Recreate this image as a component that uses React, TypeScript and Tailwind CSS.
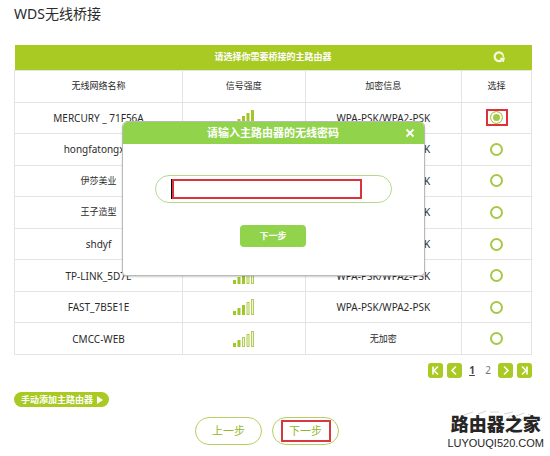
import React, { useState } from 'react';

const networks = [
  { name: 'MERCURY _ 71F56A', signal: 5, security: 'WPA-PSK/WPA2-PSK' },
  { name: 'hongfatongxin', signal: 4, security: 'WPA-PSK/WPA2-PSK' },
  { name: '伊莎美业', signal: 4, security: 'WPA-PSK/WPA2-PSK' },
  { name: '王子造型', signal: 4, security: 'WPA-PSK/WPA2-PSK' },
  { name: 'shdyf', signal: 3, security: 'WPA-PSK/WPA2-PSK' },
  { name: 'TP-LINK_5D7E', signal: 3, security: 'WPA-PSK/WPA2-PSK' },
  { name: 'FAST_7B5E1E', signal: 3, security: 'WPA-PSK/WPA2-PSK' },
  { name: 'CMCC-WEB', signal: 2, security: '无加密' },
];

const bars = [
  { x: 0, h: 4 },
  { x: 4.5, h: 7 },
  { x: 9, h: 10 },
  { x: 13.5, h: 13 },
  { x: 18, h: 16 },
];

function Signal({ level }: { level: number }) {
  return (
    <svg width="22" height="16" viewBox="0 0 22 16" className="mx-auto block" role="img" aria-label={`${level}/5`}>
      {bars.map((bar, i) =>
        i < level ? (
          <rect key={i} x={bar.x} y={16 - bar.h} width="3" height={bar.h} fill="#a2c62a" />
        ) : (
          <rect key={i} x={bar.x + 0.5} y={16.5 - bar.h} width="2" height={bar.h - 1} fill="#f0f6d6" stroke="#b1cd58" />
        )
      )}
    </svg>
  );
}

function PageButton({ label, d }: { label: string; d: string }) {
  return (
    <button type="button" aria-label={label} className="flex size-[15px] items-center justify-center rounded-[3px] bg-[#a9c923]">
      <svg width="15" height="15" viewBox="0 0 15 15" fill="none" stroke="white" strokeWidth="1.6">
        <path d={d} />
      </svg>
    </button>
  );
}

function PasswordDialog({ onClose }: { onClose: () => void }) {
  return (
    <div className="absolute inset-x-0 top-[76px] flex justify-center">
      <div role="dialog" aria-labelledby="dialog-title" className="w-[303px] overflow-hidden rounded-t-md rounded-b-sm border border-[#b9b9b9] bg-white shadow-[0_1px_2px_rgba(0,0,0,0.2)]">
        <div className="relative -mx-px -mt-px flex h-[23px] items-center justify-center bg-[#92d34c]">
          <h2 id="dialog-title" className="text-[11px] leading-4 font-bold text-white">请输入主路由器的无线密码</h2>
          <button type="button" aria-label="关闭" onClick={onClose} className="absolute right-2.5">
            <svg width="10" height="10" viewBox="0 0 10 10" stroke="white" strokeWidth="1.8">
              <path d="M1.500 1.500l7 7M8.500 1.500l-7 7" />
            </svg>
          </button>
        </div>
        <div className="flex flex-col items-center px-8 pt-[31px] pb-7">
          <div className="relative w-full">
            <input
              type="text"
              aria-label="无线密码"
              className="block h-7 w-full rounded-full border border-[#b5d98f] bg-white px-4 text-[10px] outline-none"
            />
            <div className="pointer-events-none absolute inset-y-1 right-7.5 left-4 border-l border-black">
              <div className="h-full border-2 border-[#de3139]" />
            </div>
          </div>
          <button type="button" className="mt-[22px] h-[22px] w-[66px] rounded-[4px] bg-[#92d34c] text-[9px] leading-4 font-bold text-white">
            下一步
          </button>
        </div>
      </div>
    </div>
  );
}

export default function App() {
  const [selected, setSelected] = useState(0);
  const [open, setOpen] = useState(true);

  return (
    <main className="relative bg-white pt-1 pr-[18px] pb-2.5 pl-3.5 font-['Noto_Sans','Noto_Sans_CJK_SC',sans-serif] text-[#2b2b2b]">
      <h1 className="text-[14px] leading-5">WDS无线桥接</h1>

      <div className="relative mt-[21px]">
        <table className="h-[310px] w-full table-fixed border-collapse text-center text-[9px] leading-4">
          <colgroup>
            <col className="w-[32.5%]" />
            <col className="w-[23.7%]" />
            <col className="w-[30.3%]" />
            <col className="w-[13.5%]" />
          </colgroup>
          <thead>
            <tr className="h-[25px] bg-[#a9c923] text-white">
              <th colSpan={3} className="pl-[70px] font-bold">请选择你需要桥接的主路由器</th>
              <th>
                <button type="button" aria-label="刷新" className="flex w-full justify-center pl-1">
                  <svg width="12" height="12" viewBox="0 0 12 12" fill="none">
                    <path d="M10.200 7.200A4.400 4.400 0 1 1 9.600 3.200M9.600 3.200" stroke="#f4f9dc" strokeWidth="2.300" />
                    <path d="M6.500 7l5.500-.5-1.200 5z" fill="#f4f9dc" />
                    <path d="M9 2.500a4.400 4.400 0 0 1 1.400 4" stroke="#f4f9dc" strokeWidth="1.500" />
                  </svg>
                </button>
              </th>
            </tr>
            <tr className="h-8">
              <th className="border border-[#e4e4e4] font-normal">无线网络名称</th>
              <th className="border border-[#e4e4e4] font-normal">信号强度</th>
              <th className="border border-[#e4e4e4] font-normal">加密信息</th>
              <th className="border border-[#e4e4e4] font-normal">选择</th>
            </tr>
          </thead>
          <tbody>
            {networks.map((network, index) => (
              <tr key={network.name}>
                <td className={`border border-[#e4e4e4] ${/^\w/.test(network.name) ? 'text-[10px]' : ''}`}>{network.name}</td>
                <td className="border border-[#e4e4e4]"><Signal level={network.signal} /></td>
                <td className={`border border-[#e4e4e4] ${/^\w/.test(network.security) ? 'text-[10px]' : ''}`}>{network.security}</td>
                <td className="border border-[#e4e4e4]">
                  <label className={`mx-auto flex h-[17px] w-[22px] items-center justify-center border-2 ${index === 0 ? 'border-[#de3139]' : 'border-transparent'}`}>
                    <input
                      type="radio"
                      name="network"
                      aria-label={network.name}
                      checked={selected === index}
                      onChange={() => setSelected(index)}
                      className="size-[13px] shrink-0 appearance-none rounded-full border-2 border-[#a5c947] bg-white checked:border checked:bg-[#a5c947] checked:shadow-[inset_0_0_0_2px_white]"
                    />
                  </label>
                </td>
              </tr>
            ))}
          </tbody>
        </table>

        {open && <PasswordDialog onClose={() => setOpen(false)} />}
      </div>

      <nav aria-label="分页" className="mt-[7px] flex items-center justify-end gap-1 text-[10px] leading-4 text-[#777]">
        <PageButton label="首页" d="M5 3.500v8M10 3.500l-4 4 4 4" />
        <PageButton label="上一页" d="M9 3.500l-4 4 4 4" />
        <a href="#1" className="w-3 text-center font-bold text-[#444] underline">1</a>
        <a href="#2" className="w-3 text-center">2</a>
        <PageButton label="下一页" d="M6 3.500l4 4-4 4" />
        <PageButton label="末页" d="M10 3.500v8M5 3.500l4 4-4 4" />
      </nav>

      <button type="button" className="mt-3.5 flex h-[15px] items-center gap-1 rounded-full bg-[#a9c923] pr-1.5 pl-[7px] text-[9px] leading-[15px] font-bold text-white">
        手动添加主路由器
        <svg width="6" height="8" viewBox="0 0 6 8" fill="white">
          <path d="M0 0l6 4-6 4z" />
        </svg>
      </button>

      <div className="mt-2.5 flex justify-center gap-2.5 pr-3 text-[11px] leading-4 text-[#93b52c]">
        <button type="button" className="flex h-7 w-[67px] items-center justify-center rounded-full border border-[#b5cf62]">
          上一步
        </button>
        <button type="button" className="flex h-7 w-[67px] items-center justify-center rounded-full border border-[#b5cf62]">
          <span className="flex h-[22px] w-[50px] items-center justify-center border-2 border-[#d63a3d]">下一步</span>
        </button>
      </div>

      {/* Site mark */}
      <div className="absolute right-1.5 bottom-1 flex flex-col items-center text-[#262626]">
        <svg width="80" height="20" viewBox="0 0 80 20" fill="none" stroke="#d4d4d4" strokeWidth="1" className="absolute -top-px right-0">
          <path d="M0 5l9-3M14 4l8-3M26 2h9M40 4l9-2M52 6l8-3M64 4l7 3M40 12l7-7M53 15l8-8M66 16l6-7M73 13l5-5" />
        </svg>
        <div className="relative font-['Noto_Sans_CJK_SC',sans-serif] text-[18px] leading-6 font-black">路由器之家</div>
        <div className="relative font-['Liberation_Sans',sans-serif] text-[11px] leading-4">LUYOUQI520.COM</div>
      </div>
    </main>
  );
}
